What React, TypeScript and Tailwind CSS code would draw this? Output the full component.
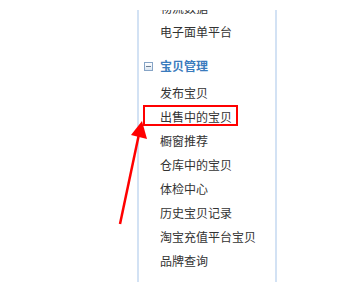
const GOODS = [
  "发布宝贝",
  "出售中的宝贝",
  "橱窗推荐",
  "仓库中的宝贝",
  "体检中心",
  "历史宝贝记录",
  "淘宝充值平台宝贝",
  "品牌查询",
];

function MinusBox() {
  return (
    <span className="w-[9px] h-[9px] border border-[#86a4c6] bg-gradient-to-b from-white to-[#dbe6f2] flex items-center justify-center shrink-0">
      <span className="w-[5px] h-px bg-[#6d7f94]" />
    </span>
  );
}

function Arrow() {
  return (
    <svg className="absolute left-0 top-0 pointer-events-none" width="352" height="289" viewBox="0 0 352 289">
      <line x1="120" y1="224" x2="139" y2="134" stroke="#ff0000" strokeWidth="2.5" />
      <polygon points="142,121 131,135 147,139" fill="#ff0000" />
    </svg>
  );
}

export default function App() {
  return (
    <div
      className="relative w-[352px] h-[289px] bg-white overflow-hidden text-[12px] text-[#333]"
      style={{ fontFamily: '"Noto Sans CJK SC", "Noto Sans", sans-serif' }}
    >
      <div className="ml-[137px] mt-[10px] w-[140px] h-[272px] border-l-2 border-r-2 border-[#d3e2f4] overflow-hidden">
        <div className="-mt-[14px] pl-[21px]">
          <div className="h-6 leading-6">物流数据</div>
          <div className="h-6 leading-6">电子面单平台</div>

          {/* 宝贝管理 */}
          <div className="mt-[10px] mb-[3px] -ml-[16px] h-6 flex items-center gap-[7px]">
            <MinusBox />
            <span className="font-bold text-[12px] text-[#3a7bbd]">宝贝管理</span>
          </div>

          {GOODS.map((g) => (
            <div key={g} className="h-6 leading-6 whitespace-nowrap">
              {g}
            </div>
          ))}
        </div>
      </div>

      {/* highlight box */}
      <div className="absolute left-[143px] top-[105px] w-[95px] h-[21px] border-2 border-[#ff0000]" />
      <Arrow />
    </div>
  );
}
